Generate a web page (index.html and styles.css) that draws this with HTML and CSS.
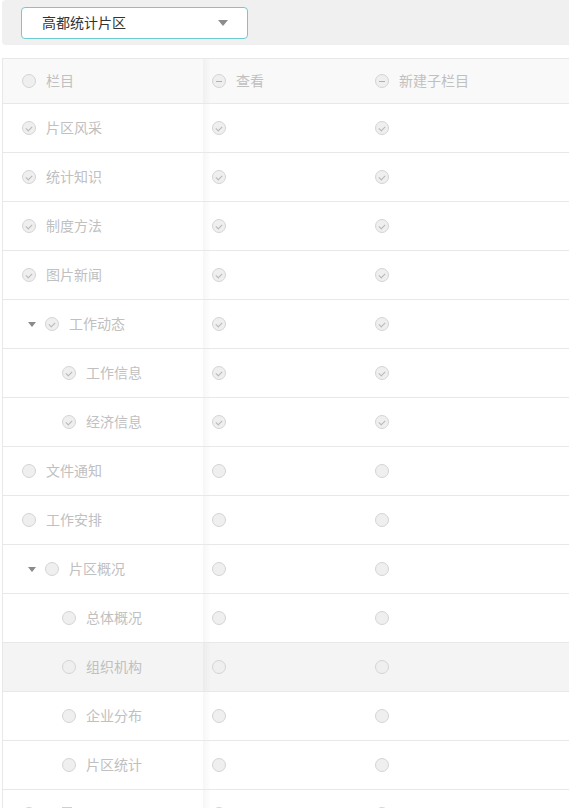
FILE: index.html
```html
<!DOCTYPE html>
<html lang="zh">
<head>
<meta charset="utf-8">
<link rel="stylesheet" href="styles.css">
</head>
<body>
<div class="page">
  <div class="topbar">
    <div class="select">
      <span class="select-text">高都统计片区</span>
      <span class="caret"></span>
    </div>
  </div>

  <div class="table">
    <div class="row head">
      <div class="cell c1 lv0"><span class="cb"></span><span class="label">栏目</span></div>
      <div class="cell c2"><span class="cb ind"></span><span class="label">查看</span></div>
      <div class="cell c3"><span class="cb ind"></span><span class="label">新建子栏目</span></div>
    </div>

    <div class="row">
      <div class="cell c1 lv0"><span class="cb chk"></span><span class="label">片区风采</span></div>
      <div class="cell c2"><span class="cb chk"></span></div>
      <div class="cell c3"><span class="cb chk"></span></div>
    </div>
    <div class="row">
      <div class="cell c1 lv0"><span class="cb chk"></span><span class="label">统计知识</span></div>
      <div class="cell c2"><span class="cb chk"></span></div>
      <div class="cell c3"><span class="cb chk"></span></div>
    </div>
    <div class="row">
      <div class="cell c1 lv0"><span class="cb chk"></span><span class="label">制度方法</span></div>
      <div class="cell c2"><span class="cb chk"></span></div>
      <div class="cell c3"><span class="cb chk"></span></div>
    </div>
    <div class="row">
      <div class="cell c1 lv0"><span class="cb chk"></span><span class="label">图片新闻</span></div>
      <div class="cell c2"><span class="cb chk"></span></div>
      <div class="cell c3"><span class="cb chk"></span></div>
    </div>
    <div class="row">
      <div class="cell c1 lvp"><span class="arrow"></span><span class="cb chk"></span><span class="label">工作动态</span></div>
      <div class="cell c2"><span class="cb chk"></span></div>
      <div class="cell c3"><span class="cb chk"></span></div>
    </div>
    <div class="row">
      <div class="cell c1 lv2"><span class="cb chk"></span><span class="label">工作信息</span></div>
      <div class="cell c2"><span class="cb chk"></span></div>
      <div class="cell c3"><span class="cb chk"></span></div>
    </div>
    <div class="row">
      <div class="cell c1 lv2"><span class="cb chk"></span><span class="label">经济信息</span></div>
      <div class="cell c2"><span class="cb chk"></span></div>
      <div class="cell c3"><span class="cb chk"></span></div>
    </div>
    <div class="row">
      <div class="cell c1 lv0"><span class="cb"></span><span class="label">文件通知</span></div>
      <div class="cell c2"><span class="cb"></span></div>
      <div class="cell c3"><span class="cb"></span></div>
    </div>
    <div class="row">
      <div class="cell c1 lv0"><span class="cb"></span><span class="label">工作安排</span></div>
      <div class="cell c2"><span class="cb"></span></div>
      <div class="cell c3"><span class="cb"></span></div>
    </div>
    <div class="row">
      <div class="cell c1 lvp"><span class="arrow"></span><span class="cb"></span><span class="label">片区概况</span></div>
      <div class="cell c2"><span class="cb"></span></div>
      <div class="cell c3"><span class="cb"></span></div>
    </div>
    <div class="row">
      <div class="cell c1 lv2"><span class="cb"></span><span class="label">总体概况</span></div>
      <div class="cell c2"><span class="cb"></span></div>
      <div class="cell c3"><span class="cb"></span></div>
    </div>
    <div class="row hover">
      <div class="cell c1 lv2"><span class="cb"></span><span class="label">组织机构</span></div>
      <div class="cell c2"><span class="cb"></span></div>
      <div class="cell c3"><span class="cb"></span></div>
    </div>
    <div class="row">
      <div class="cell c1 lv2"><span class="cb"></span><span class="label">企业分布</span></div>
      <div class="cell c2"><span class="cb"></span></div>
      <div class="cell c3"><span class="cb"></span></div>
    </div>
    <div class="row">
      <div class="cell c1 lv2"><span class="cb"></span><span class="label">片区统计</span></div>
      <div class="cell c2"><span class="cb"></span></div>
      <div class="cell c3"><span class="cb"></span></div>
    </div>
    <div class="row">
      <div class="cell c1 lv0"><span class="cb"></span><span class="sq"></span><span class="dot"></span></div>
      <div class="cell c2"><span class="cb"></span></div>
      <div class="cell c3"><span class="cb"></span></div>
    </div>
  </div>
</div>
</body>
</html>
```

FILE: styles.css
```css
html, body {
  margin: 0;
  padding: 0;
  overflow: hidden;
  background: #ffffff;
}

body {
  font-family: "Noto Sans CJK SC", "Noto Sans", sans-serif;
  font-size: 14px;
  color: #333;
}

.page {
  padding-left: 2px;
  overflow: hidden;
}

.topbar {
  height: 45px;
  background: #f0f0f0;
  border-radius: 4px 0 0 4px;
  padding: 7px 0 0 19px;
  box-sizing: border-box;
}

.select {
  width: 227px;
  height: 32px;
  box-sizing: border-box;
  border: 1px solid #6fcad2;
  border-radius: 4px;
  background: #fff;
  display: flex;
  align-items: center;
  padding: 0 19px 0 20px;
}

.select-text {
  flex: 1;
  font-size: 14px;
  color: #333;
  line-height: 20px;
  padding-bottom: 2px;
}

.caret {
  width: 0;
  height: 0;
  border-left: 5px solid transparent;
  border-right: 5px solid transparent;
  border-top: 6px solid #8c8c8c;
}

.table {
  margin-top: 13px;
  border-top: 1px solid #e8e8e8;
  border-left: 1px solid #e8e8e8;
}

.row {
  display: grid;
  grid-template-columns: 200px 162px 1fr;
  height: 49px;
  box-sizing: border-box;
  border-bottom: 1px solid #e8e8e8;
}

.row.head {
  height: 45px;
  background: #f9f9f9;
}

.row.hover {
  background: #f4f4f4;
}

.cell {
  display: flex;
  align-items: center;
  color: #c0c0c0;
  font-size: 14px;
}

.c2 {
  padding-left: 9px;
  background: linear-gradient(to right, rgba(0, 0, 0, 0.035), rgba(0, 0, 0, 0) 8px);
}

.c3 {
  padding-left: 10px;
}

.lv0 {
  padding-left: 19px;
}

.lvp {
  padding-left: 25px;
}

.lv2 {
  padding-left: 59px;
}

.label {
  margin-left: 10px;
  line-height: 20px;
  padding-bottom: 3px;
}

.cb {
  width: 14px;
  height: 14px;
  box-sizing: border-box;
  border: 1px solid #d4d4d4;
  border-radius: 50%;
  background: #efefef;
  position: relative;
  flex: none;
}

.cb.chk::after {
  content: "";
  position: absolute;
  left: 3px;
  top: 3.5px;
  width: 5px;
  height: 3px;
  border-left: 1.3px solid #b8b8b8;
  border-bottom: 1.3px solid #b8b8b8;
  transform: rotate(-45deg);
  transform-origin: center;
}

.cb.ind::after {
  content: "";
  position: absolute;
  left: 3px;
  top: 5.5px;
  width: 6px;
  height: 1px;
  background: #b0b0b0;
}

.arrow {
  width: 0;
  height: 0;
  border-left: 4px solid transparent;
  border-right: 4px solid transparent;
  border-top: 5px solid #8a8a8a;
  margin-right: 9px;
  flex: none;
}

.sq {
  width: 10px;
  height: 14px;
  background: #cfcfcf;
  margin-left: 26px;
}

.dot {
  width: 12px;
  height: 12px;
  border-radius: 50%;
  background: #5bc3cc;
  margin-left: 50px;
}
```
